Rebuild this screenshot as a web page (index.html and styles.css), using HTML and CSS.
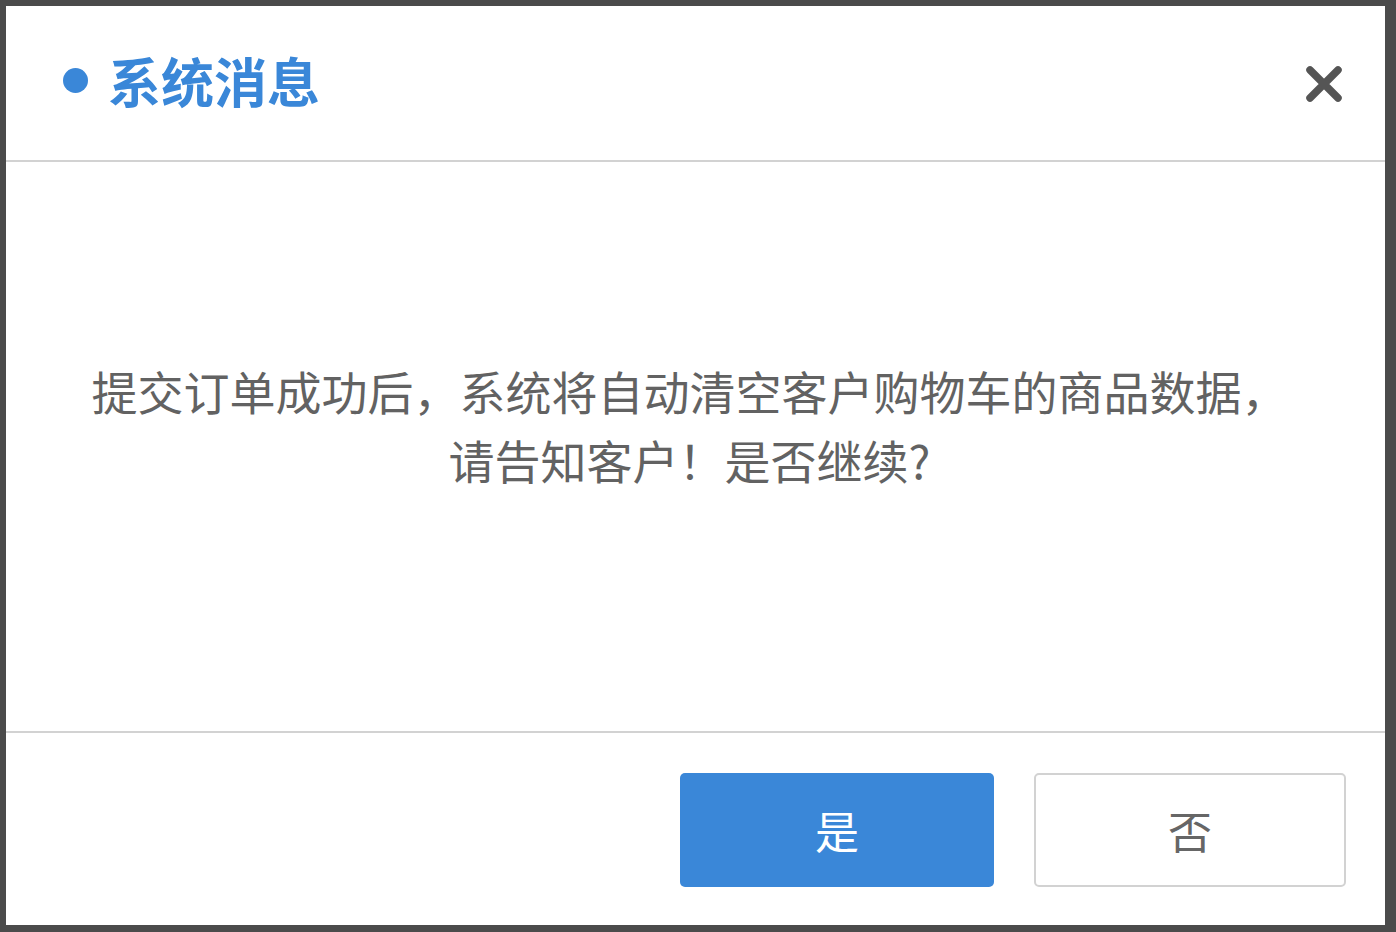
FILE: index.html
```html
<!DOCTYPE html>
<html lang="zh-CN">
<head>
<meta charset="utf-8">
<title>系统消息</title>
<link rel="stylesheet" href="styles.css">
</head>
<body>
<div class="frame">
  <div class="dialog">
    <div class="header">
      <div class="title"><span class="dot"></span><span class="title-text">系统消息</span></div>
      <button class="close" aria-label="关闭">
        <svg width="38" height="38" viewBox="0 0 38 38"><path d="M5 5 L33 33 M33 5 L5 33" stroke="#555" stroke-width="7.5" stroke-linecap="round"/></svg>
      </button>
    </div>
    <div class="content">
      <p class="message">提交订单成功后，系统将自动清空客户购物车的商品数据，<br>请告知客户！是否继续?</p>
    </div>
    <div class="footer">
      <button class="btn btn-primary">是</button>
      <button class="btn btn-default">否</button>
    </div>
  </div>
</div>
</body>
</html>
```
FILE: styles.css
```css
html, body {
  margin: 0;
  padding: 0;
  height: 100%;
  background: #4b4b4b;
}
body {
  font-family: "Noto Sans CJK SC", "Noto Sans", sans-serif;
}
.frame {
  box-sizing: border-box;
  height: 932px;
  padding: 6px 11px 7px 6px;
}
.dialog {
  height: 100%;
  background: #ffffff;
  display: flex;
  flex-direction: column;
}
.header {
  height: 154px;
  flex: none;
  border-bottom: 2px solid #d2d2d2;
  display: flex;
  align-items: center;
  justify-content: space-between;
  padding: 0 42px 0 57px;
}
.title {
  display: flex;
  align-items: center;
  gap: 20px;
  color: #3a87d8;
  margin-top: -6px;
}
.dot {
  width: 25px;
  height: 25px;
  border-radius: 50%;
  background: #3a87d8;
}
.title-text {
  font-size: 53px;
  font-weight: 700;
  line-height: 1;
}
.close {
  border: 0;
  background: transparent;
  padding: 0;
  width: 38px;
  height: 38px;
  margin-top: 2px;
  cursor: pointer;
}
.content {
  flex: 1;
  border-bottom: 2px solid #d2d2d2;
  display: flex;
  align-items: center;
  justify-content: center;
  padding-right: 12px;
}
.message {
  margin: 0;
  margin-top: -44px;
  text-align: center;
  font-size: 46px;
  line-height: 69px;
  color: #626262;
}
.footer {
  height: 192px;
  flex: none;
  box-sizing: border-box;
  display: flex;
  justify-content: flex-end;
  gap: 40px;
  padding: 40px 39px 38px 0;
}
.btn {
  width: 314px;
  height: 114px;
  box-sizing: border-box;
  border-radius: 5px;
  font-family: "Noto Sans CJK SC", "Noto Sans", sans-serif;
  font-size: 44px;
  cursor: pointer;
}
.btn-primary {
  background: #3a87d8;
  border: 0;
  color: #ffffff;
}
.btn-default {
  width: 312px;
  background: #ffffff;
  border: 2px solid #d2d2d2;
  color: #666666;
}
```
